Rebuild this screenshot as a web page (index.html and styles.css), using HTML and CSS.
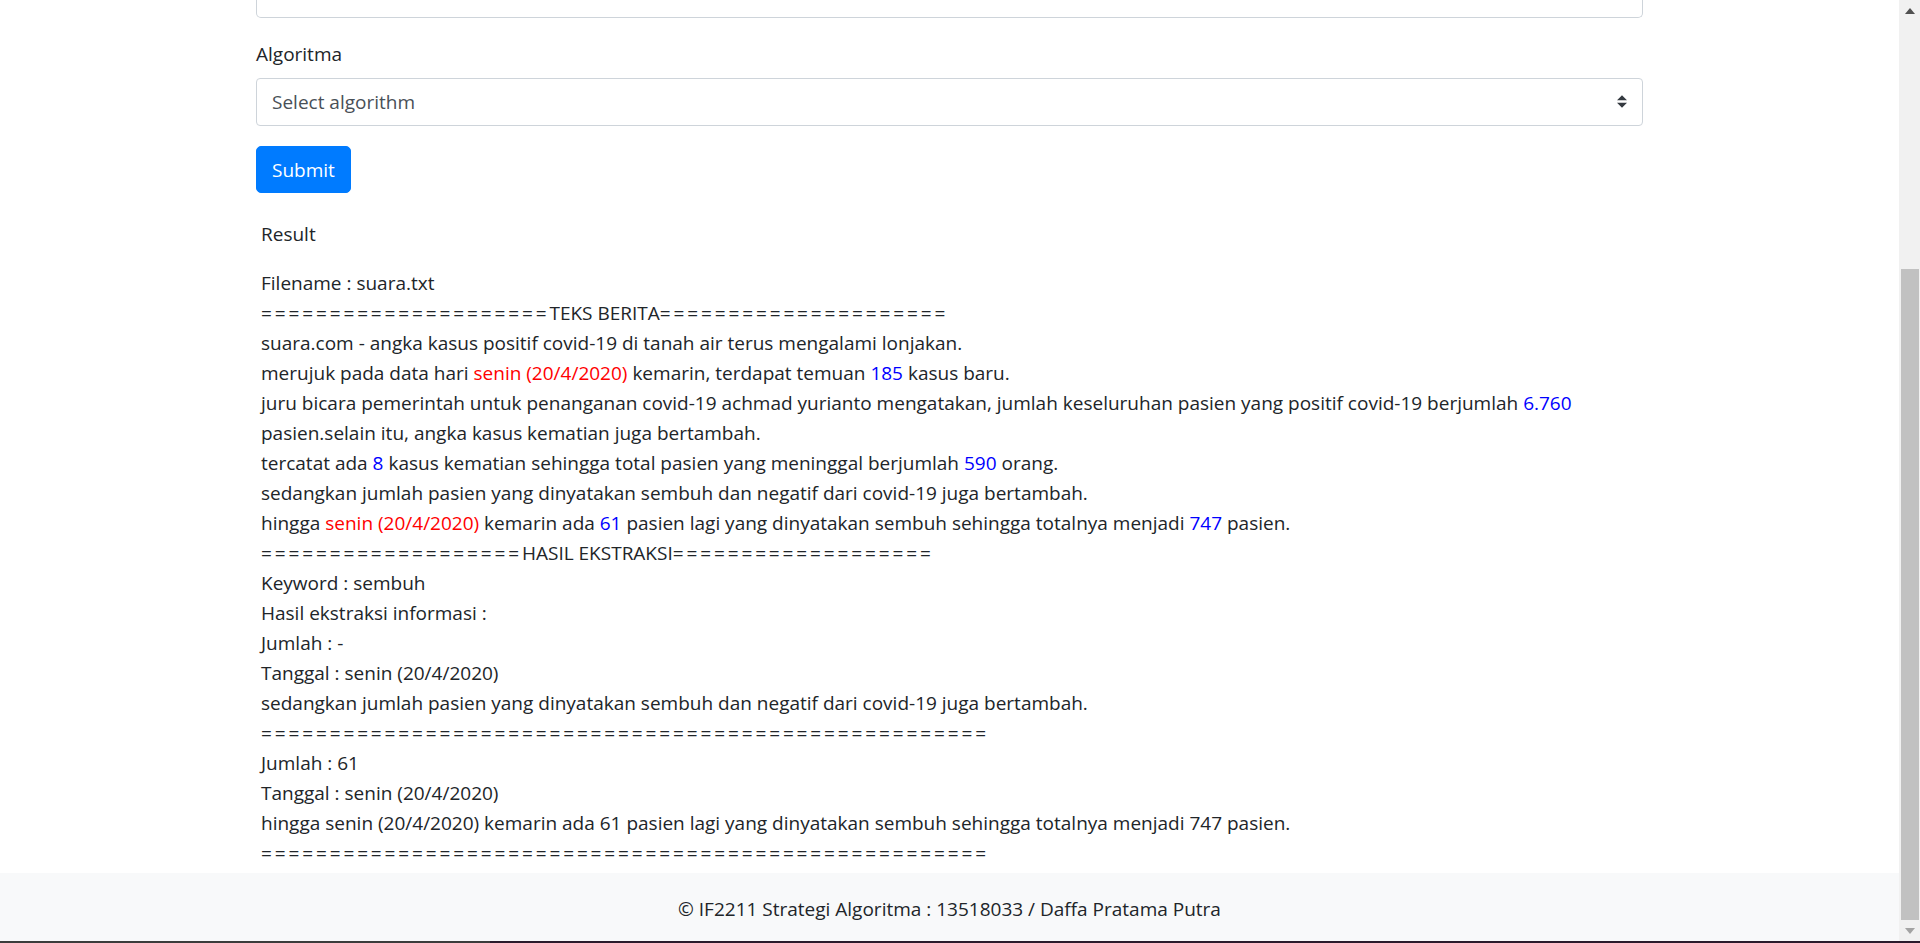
FILE: index.html
```html
<!DOCTYPE html>
<html lang="id">
<head>
<meta charset="utf-8">
<title>Ekstraksi Informasi</title>
<link rel="stylesheet" href="styles.css">
</head>
<body>
<div class="screen">
  <div class="page">
    <main class="container">
      <div class="input-tail"></div>
      <div class="form-group">
        <label class="label">Algoritma</label>
        <div class="select">
          <span>Select algorithm</span>
          <svg class="select-arrow" width="10" height="13" viewBox="0 0 4 5"><path fill="#343a40" d="M2 0L0 2h4zm0 5L0 3h4z"/></svg>
        </div>
      </div>
      <button class="btn">Submit</button>
      <section class="result">
        <p class="result-title">Result</p>
        <div class="lines">
          <div class="line">Filename : suara.txt</div>
          <div class="line"><span class="eq">=====================</span>TEKS BERITA<span class="eq">=====================</span></div>
          <div class="line">suara.com - angka kasus positif covid-19 di tanah air terus mengalami lonjakan.</div>
          <div class="line">merujuk pada data hari <span class="date">senin (20/4/2020)</span> kemarin, terdapat temuan <span class="num">185</span> kasus baru.</div>
          <div class="line">juru bicara pemerintah untuk penanganan covid-19 achmad yurianto mengatakan, jumlah keseluruhan pasien yang positif covid-19 berjumlah <span class="num">6.760</span></div>
          <div class="line">pasien.selain itu, angka kasus kematian juga bertambah.</div>
          <div class="line">tercatat ada <span class="num">8</span> kasus kematian sehingga total pasien yang meninggal berjumlah <span class="num">590</span> orang.</div>
          <div class="line">sedangkan jumlah pasien yang dinyatakan sembuh dan negatif dari covid-19 juga bertambah.</div>
          <div class="line">hingga <span class="date">senin (20/4/2020)</span> kemarin ada <span class="num">61</span> pasien lagi yang dinyatakan sembuh sehingga totalnya menjadi <span class="num">747</span> pasien.</div>
          <div class="line"><span class="eq">===================</span>HASIL EKSTRAKSI<span class="eq">===================</span></div>
          <div class="line">Keyword : sembuh</div>
          <div class="line">Hasil ekstraksi informasi :</div>
          <div class="line">Jumlah : -</div>
          <div class="line">Tanggal : senin (20/4/2020)</div>
          <div class="line">sedangkan jumlah pasien yang dinyatakan sembuh dan negatif dari covid-19 juga bertambah.</div>
          <div class="line"><span class="eq">=====================================================</span></div>
          <div class="line">Jumlah : 61</div>
          <div class="line">Tanggal : senin (20/4/2020)</div>
          <div class="line">hingga senin (20/4/2020) kemarin ada 61 pasien lagi yang dinyatakan sembuh sehingga totalnya menjadi 747 pasien.</div>
          <div class="line"><span class="eq">=====================================================</span></div>
        </div>
      </section>
    </main>
    <footer class="footer">© IF2211 Strategi Algoritma : 13518033 / Daffa Pratama Putra</footer>
  </div>
  <div class="scrollbar">
    <div class="sb-btn"><svg width="10" height="6" viewBox="0 0 10 6"><path fill="#505050" d="M5 0L10 6H0z"/></svg></div>
    <div class="sb-track">
      <div class="sb-space"></div>
      <div class="sb-thumb"></div>
    </div>
    <div class="sb-btn"><svg width="10" height="6" viewBox="0 0 10 6"><path fill="#a3a3a3" d="M0 0H10L5 6z"/></svg></div>
  </div>
</div>
<div class="taskbar"><div class="tb-left"></div><div class="tb-right"></div></div>
</body>
</html>
```

FILE: styles.css
```css
* { box-sizing: border-box; }
html, body { margin: 0; padding: 0; }
body {
  width: 1920px;
  height: 943px;
  overflow: hidden;
  display: flex;
  flex-direction: column;
  font-family: "Open Sans", "Noto Sans", sans-serif;
  font-size: 19px;
  line-height: 30px;
  color: #212529;
  background: #fff;
}
.screen {
  flex: 1;
  display: flex;
  min-height: 0;
}
.page {
  flex: 1;
  display: flex;
  flex-direction: column;
  min-width: 0;
}
.container {
  width: 1387px;
  margin: 0 auto;
}
.input-tail {
  height: 18px;
  border: 1px solid #ced4da;
  border-top: none;
  border-radius: 0 0 5px 5px;
}
.form-group {
  margin-top: 21px;
}
.label {
  display: block;
  margin-bottom: 9px;
}
.select {
  height: 47.5px;
  border: 1px solid #ced4da;
  border-radius: 4px;
  padding: 1px 15px 0 15px;
  display: flex;
  align-items: center;
  justify-content: space-between;
  color: #495057;
}
.select-arrow { display: block; margin-top: -1px; }
.btn {
  display: block;
  margin-top: 20px;
  height: 47.5px;
  padding: 1px 15px 0;
  border: 1px solid #007bff;
  border-radius: 5px;
  background: #007bff;
  color: #fff;
  font: inherit;
}
.result {
  margin-top: 25.5px;
  padding-left: 5px;
}
.result-title {
  margin: 0 0 19px 0;
}
.line {
  white-space: nowrap;
}
.eq { letter-spacing: 2.87px; }
.date { color: red; }
.num { color: blue; }
.footer {
  margin-top: auto;
  background: #f8f9fa;
  text-align: center;
  padding: 21px 0 17px;
}
.scrollbar {
  width: 21px;
  background: #f1f1f1;
  display: flex;
  flex-direction: column;
}
.sb-btn {
  height: 21px;
  display: flex;
  align-items: center;
  justify-content: center;
}
.sb-track {
  flex: 1;
  display: flex;
  flex-direction: column;
}
.sb-space { height: 248px; }
.sb-thumb {
  flex: 1;
  margin: 0 1px 0 2px;
  background: #c1c1c1;
}
.taskbar {
  height: 2px;
  display: flex;
}
.tb-left { width: 490px; background: #3c3c3c; }
.tb-right { flex: 1; background: #2b1a2c; }
```
